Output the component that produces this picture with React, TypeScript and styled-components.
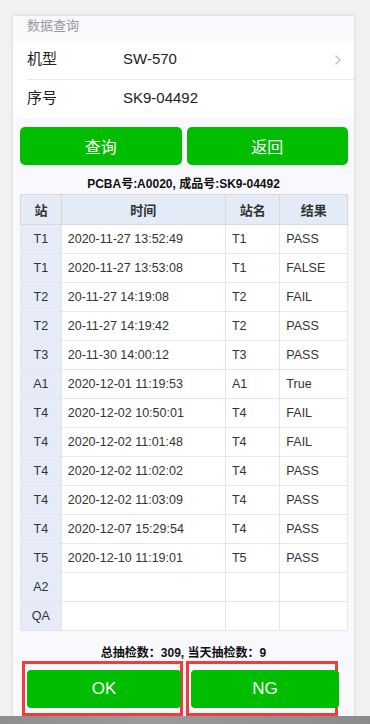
import styled, { createGlobalStyle } from "styled-components";

const GlobalStyle = createGlobalStyle`
  html, body {
    margin: 0;
    padding: 0;
    background: #f2f2f2;
    font-family: "Liberation Sans", "Noto Sans CJK SC", Arial, sans-serif;
    color: #222;
  }
  body {
    height: 724px;
    overflow: hidden;
  }
`;

const Page = styled.div`
  padding: 15px 0 0 12px;
`;

const Card = styled.div`
  width: 341px;
  height: 720px;
  background: #f9f8fd;
  border: 1px solid #e2e2e2;
  box-shadow: 0 0 8px rgba(0, 0, 0, 0.05);
`;

const CardTitle = styled.div`
  height: 25px;
  line-height: 20px;
  padding-left: 14px;
  font-size: 13px;
  color: #9a9a9a;
`;

const FieldList = styled.div`
  background: #fff;
`;

const Field = styled.div<{ $divider?: boolean }>`
  display: flex;
  align-items: center;
  height: 38px;
  margin-left: 14px;
  padding-right: 12px;
  font-size: 15px;
  line-height: 18px;
  border-bottom: ${({ $divider }) => ($divider ? "1px solid #e8e8e8" : "none")};
`;

const FieldLabel = styled.span`
  width: 96px;
  margin-top: -2px;
`;

const FieldValue = styled.span`
  flex: 1;
  margin-top: -2px;
`;

const Chevron = () => (
  <svg width="8" height="12" viewBox="0 0 8 12">
    <path d="M1.5 1.5 L6 6 L1.5 10.5" fill="none" stroke="#c4c4c4" strokeWidth="1.6" />
  </svg>
);

const ButtonRow = styled.div`
  display: grid;
  grid-template-columns: 1fr 1fr;
  column-gap: 5px;
  padding: 9px 6px 0 7px;
`;

const GreenButton = styled.button`
  height: 38px;
  border: none;
  border-radius: 5px;
  background: #00bd00;
  color: #fff;
  font-family: "Liberation Sans", "Noto Sans CJK SC", sans-serif;
  font-size: 16px;
  padding: 0;
`;

const Caption = styled.div`
  text-align: center;
  font-size: 12px;
  font-weight: bold;
  color: #111;
  line-height: 16px;
  padding: 11px 0 2px;
`;

const TableWrap = styled.div`
  padding: 0 6px 0 7px;
`;

const Table = styled.table`
  border-collapse: collapse;
  table-layout: fixed;
  border: 1px solid #dadada;
  font-size: 12.5px;
`;

const Th = styled.th<{ $w: number }>`
  width: ${({ $w }) => $w}px;
  height: 29px;
  padding: 0;
  background: #e3ebf6;
  border: 1px solid #d8d8d8;
  font-weight: bold;
  font-size: 13px;
  color: #333;
  text-align: center;
`;

const Td = styled.td<{ $head?: boolean }>`
  height: 28px;
  padding: 0 6px;
  border: 1px solid #e6e6e6;
  background: ${({ $head }) => ($head ? "#e5ecf7" : "#fff")};
  text-align: ${({ $head }) => ($head ? "center" : "left")};
  color: #333;
  white-space: nowrap;
  overflow: hidden;
`;

const Summary = styled.div`
  text-align: center;
  font-size: 12px;
  font-weight: bold;
  color: #111;
  line-height: 16px;
  padding: 14px 0 0;
`;

const ActionRow = styled.div`
  display: flex;
  padding-left: 9px;
  column-gap: 3px;
`;

const Marked = styled.div<{ $w: number }>`
  width: ${({ $w }) => $w}px;
  box-sizing: border-box;
  border: 3px solid #f23b3b;
  padding: 6px 0 5px 2px;
  display: flex;
`;

const ActionButton = styled(GreenButton)<{ $extra?: number }>`
  flex: 1;
  margin-right: ${({ $extra }) => -($extra ?? 1)}px;
  border-radius: 4px;
  font-size: 17px;
  position: relative;
`;

const BottomBar = styled.div`
  position: fixed;
  left: 0;
  right: 0;
  bottom: 0;
  height: 8px;
  background: linear-gradient(90deg, #8e8e8e, #9a9a9a 40%, #8a8a8a);
`;

const rows: [string, string, string, string][] = [
  ["T1", "2020-11-27 13:52:49", "T1", "PASS"],
  ["T1", "2020-11-27 13:53:08", "T1", "FALSE"],
  ["T2", "20-11-27 14:19:08", "T2", "FAIL"],
  ["T2", "20-11-27 14:19:42", "T2", "PASS"],
  ["T3", "20-11-30 14:00:12", "T3", "PASS"],
  ["A1", "2020-12-01 11:19:53", "A1", "True"],
  ["T4", "2020-12-02 10:50:01", "T4", "FAIL"],
  ["T4", "2020-12-02 11:01:48", "T4", "FAIL"],
  ["T4", "2020-12-02 11:02:02", "T4", "PASS"],
  ["T4", "2020-12-02 11:03:09", "T4", "PASS"],
  ["T4", "2020-12-07 15:29:54", "T4", "PASS"],
  ["T5", "2020-12-10 11:19:01", "T5", "PASS"],
  ["A2", "", "", ""],
  ["QA", "", "", ""],
];

export default function App() {
  return (
    <>
      <GlobalStyle />
      <Page>
        <Card>
          <CardTitle>数据查询</CardTitle>
          <FieldList>
            <Field $divider>
              <FieldLabel>机型</FieldLabel>
              <FieldValue>SW-570</FieldValue>
              <Chevron />
            </Field>
            <Field>
              <FieldLabel>序号</FieldLabel>
              <FieldValue>SK9-04492</FieldValue>
            </Field>
          </FieldList>
          <ButtonRow>
            <GreenButton>查询</GreenButton>
            <GreenButton>返回</GreenButton>
          </ButtonRow>
          <Caption>PCBA号:A0020, 成品号:SK9-04492</Caption>
          <TableWrap>
            <Table>
              <thead>
                <tr>
                  <Th $w={40}>站</Th>
                  <Th $w={164}>时间</Th>
                  <Th $w={54}>站名</Th>
                  <Th $w={67}>结果</Th>
                </tr>
              </thead>
              <tbody>
                {rows.map((r, i) => (
                  <tr key={i}>
                    <Td $head>{r[0]}</Td>
                    <Td>{r[1]}</Td>
                    <Td>{r[2]}</Td>
                    <Td>{r[3]}</Td>
                  </tr>
                ))}
              </tbody>
            </Table>
          </TableWrap>
          <Summary>总抽检数：309, 当天抽检数：9</Summary>
          <ActionRow>
            <Marked $w={161}>
              <ActionButton $extra={1}>OK</ActionButton>
            </Marked>
            <Marked $w={152}>
              <ActionButton $extra={4}>NG</ActionButton>
            </Marked>
          </ActionRow>
        </Card>
      </Page>
      <BottomBar />
    </>
  );
}
